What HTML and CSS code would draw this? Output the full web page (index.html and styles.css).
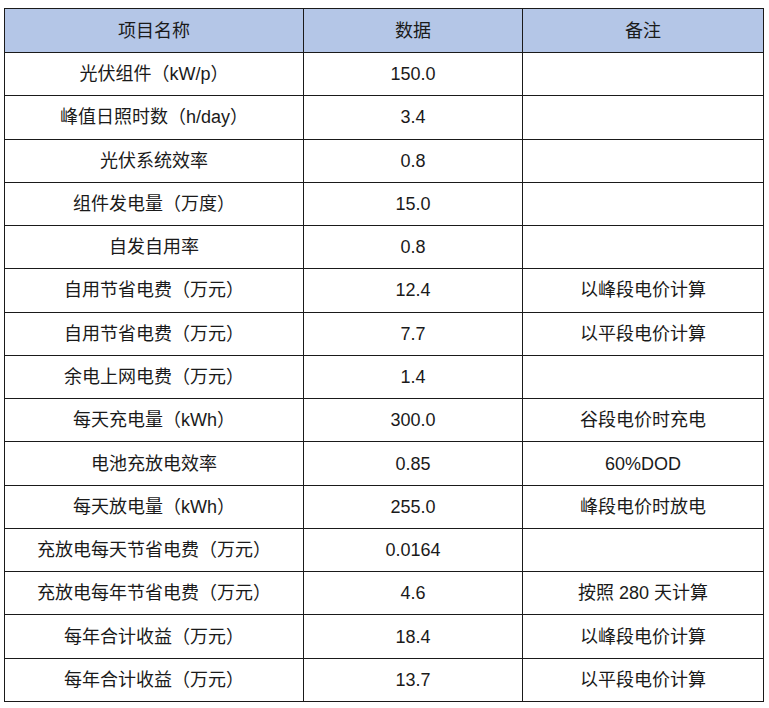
FILE: index.html
```html
<!DOCTYPE html>
<html lang="zh-CN">
<head>
<meta charset="utf-8">
<link rel="stylesheet" href="styles.css">
</head>
<body>
<table class="data">
  <colgroup>
    <col class="c1"><col class="c2"><col class="c3">
  </colgroup>
  <thead>
    <tr><th>项目名称</th><th>数据</th><th>备注</th></tr>
  </thead>
  <tbody>
    <tr><td>光伏组件（kW/p）</td><td>150.0</td><td></td></tr>
    <tr><td>峰值日照时数（h/day）</td><td>3.4</td><td></td></tr>
    <tr><td>光伏系统效率</td><td>0.8</td><td></td></tr>
    <tr><td>组件发电量（万度）</td><td>15.0</td><td></td></tr>
    <tr><td>自发自用率</td><td>0.8</td><td></td></tr>
    <tr><td>自用节省电费（万元）</td><td>12.4</td><td>以峰段电价计算</td></tr>
    <tr><td>自用节省电费（万元）</td><td>7.7</td><td>以平段电价计算</td></tr>
    <tr><td>余电上网电费（万元）</td><td>1.4</td><td></td></tr>
    <tr><td>每天充电量（kWh）</td><td>300.0</td><td>谷段电价时充电</td></tr>
    <tr><td>电池充放电效率</td><td>0.85</td><td>60%DOD</td></tr>
    <tr><td>每天放电量（kWh）</td><td>255.0</td><td>峰段电价时放电</td></tr>
    <tr><td>充放电每天节省电费（万元）</td><td>0.0164</td><td></td></tr>
    <tr><td>充放电每年节省电费（万元）</td><td>4.6</td><td>按照 280 天计算</td></tr>
    <tr><td>每年合计收益（万元）</td><td>18.4</td><td>以峰段电价计算</td></tr>
    <tr><td>每年合计收益（万元）</td><td>13.7</td><td>以平段电价计算</td></tr>
  </tbody>
</table>
</body>
</html>
```

FILE: styles.css
```css
html, body {
  margin: 0;
  padding: 0;
  background: #ffffff;
}
body {
  padding: 8px 0 0 4px;
  font-family: "Liberation Sans", "Noto Sans CJK SC", sans-serif;
  font-size: 18px;
  color: #1a1a1a;
}
.data {
  border-collapse: collapse;
  table-layout: fixed;
  width: 759px;
}
.c1 { width: 299px; }
.c2 { width: 219px; }
.c3 { width: 241px; }
.data th,
.data td {
  border: 1px solid #1a1a1a;
  text-align: center;
  vertical-align: middle;
  padding: 0;
  font-weight: normal;
  line-height: 20px;
  white-space: nowrap;
}
.data thead tr { height: 44px; }
.data thead th { background: #b4c6e7; }
.data tbody tr { height: 43.27px; }
```
